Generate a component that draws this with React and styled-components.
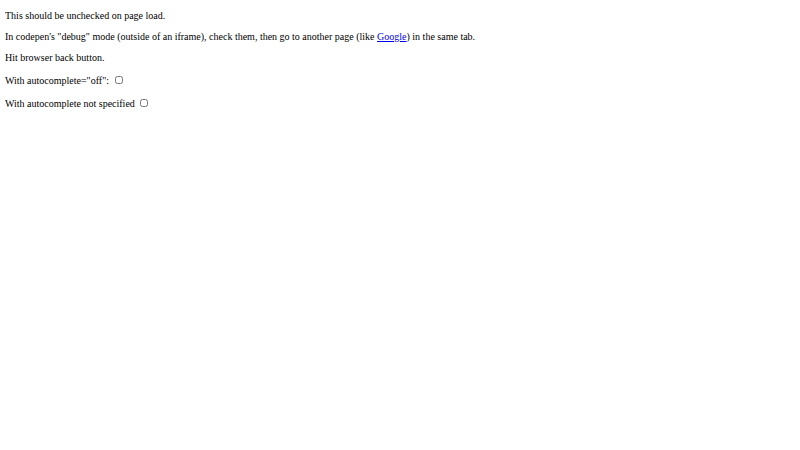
import React from "react";
import styled, { createGlobalStyle } from "styled-components";

const GlobalStyle = createGlobalStyle`
  body {
    margin: 0 5px 5px;
    font-family: "Liberation Serif", "Times New Roman", serif;
    font-size: 10px;
    color: #000;
    background: #fff;
  }
`;

const Page = styled.div`
  display: flow-root;
`;

const Para = styled.p`
  margin: 10px 0;
  line-height: normal;
`;

const Link = styled.a`
  color: #0000ee;
  text-decoration: underline;
`;

const Check = styled.input.attrs({ type: "checkbox" })`
  width: 8px;
  height: 8px;
  margin: 3px 2px 2px 3px;
  vertical-align: baseline;
`;

const App = () => {
  return (
    <Page>
      <GlobalStyle />
      <Para>This should be unchecked on page load.</Para>
      <Para>
        In codepen's "debug" mode (outside of an iframe), check them, then go to another page (like{" "}
        <Link href="#">Google</Link>) in the same tab.
      </Para>
      <Para>Hit browser back button.</Para>
      <Para>
        With autocomplete="off": <Check autoComplete="off" />
      </Para>
      <Para>
        With autocomplete not specified <Check />
      </Para>
    </Page>
  );
};

export default App;
